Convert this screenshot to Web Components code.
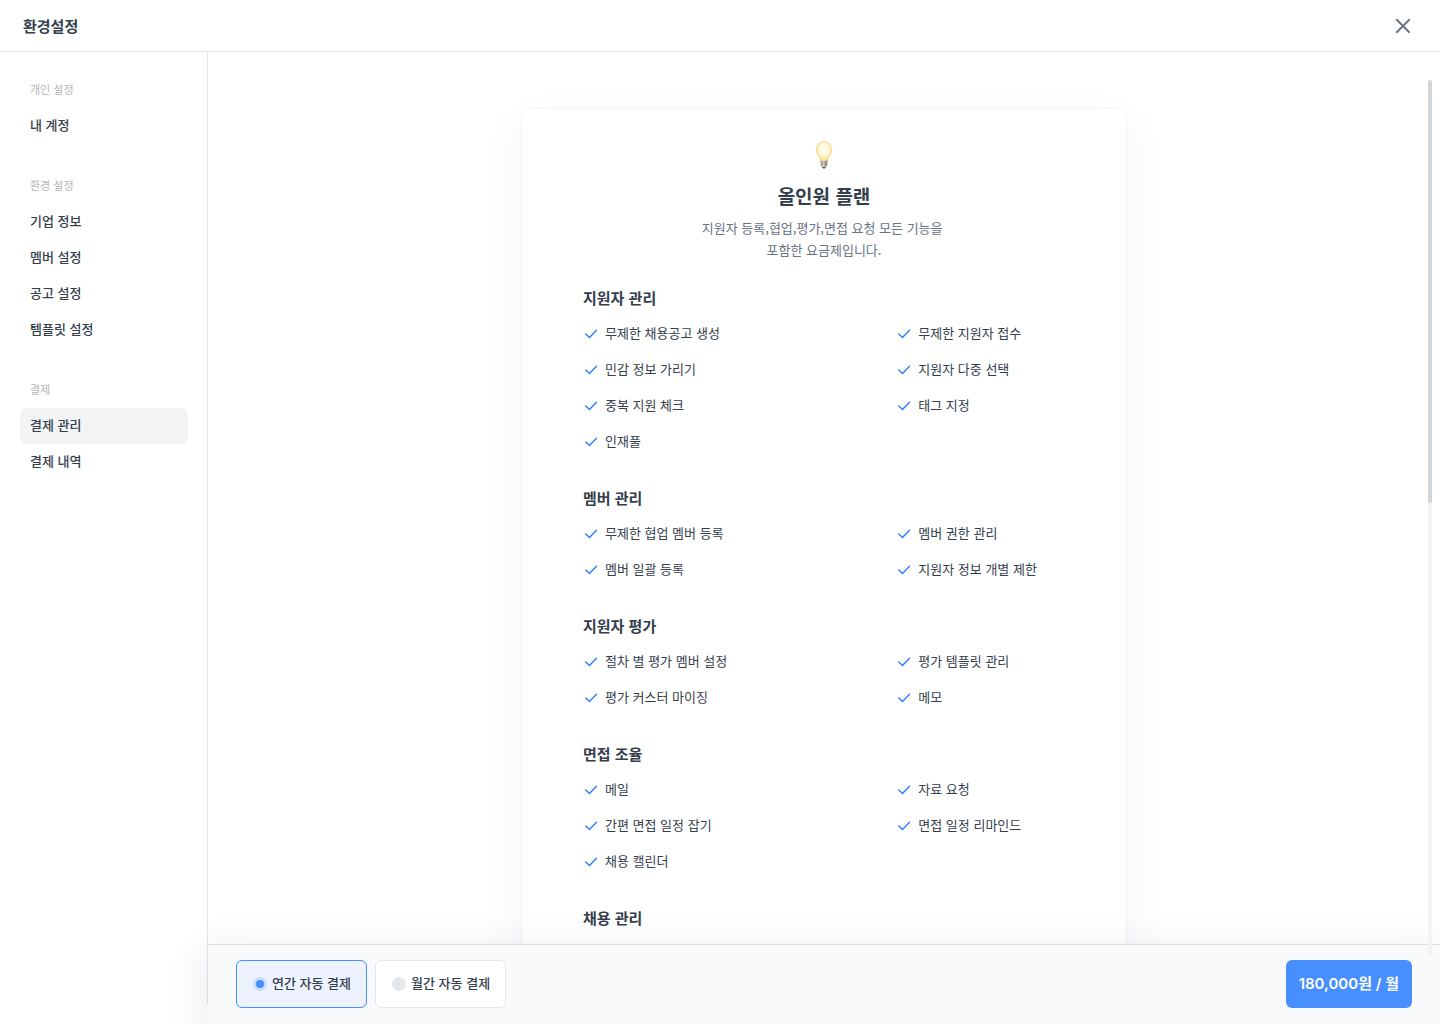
<!DOCTYPE html>
<html lang="ko">
<head>
<meta charset="utf-8">
<meta name="viewport" content="width=device-width, initial-scale=1">
<title>환경설정</title>
<style>
  html, body { margin: 0; height: 100%; }
  body {
    --ink: #343e4c; --muted: #677483; --faint: #b0b5bc; --line: #e4e6e9; --blue: #478eff;
    font: 400 13px/22px "Noto Sans CJK KR", sans-serif;
    color: var(--ink); background: #fff;
  }
</style>
</head>
<body>
<settings-app>
  <settings-header slot="header">환경설정</settings-header>
  <settings-nav slot="nav">
    <nav-group label="개인 설정">
      <nav-item>내 계정</nav-item>
    </nav-group>
    <nav-group label="환경 설정">
      <nav-item>기업 정보</nav-item>
      <nav-item>멤버 설정</nav-item>
      <nav-item>공고 설정</nav-item>
      <nav-item>템플릿 설정</nav-item>
    </nav-group>
    <nav-group label="결제">
      <nav-item current>결제 관리</nav-item>
      <nav-item>결제 내역</nav-item>
    </nav-group>
  </settings-nav>
  <plan-card>
    <span slot="title">올인원 플랜</span>
    <span slot="text">지원자 등록,협업,평가,면접 요청 모든 기능을&nbsp;<br>포함한 요금제입니다.</span>
    <feature-group label="지원자 관리">
      <feature-item>무제한 채용공고 생성</feature-item><feature-item>무제한 지원자 접수</feature-item>
      <feature-item>민감 정보 가리기</feature-item><feature-item>지원자 다중 선택</feature-item>
      <feature-item>중복 지원 체크</feature-item><feature-item>태그 지정</feature-item>
      <feature-item>인재풀</feature-item>
    </feature-group>
    <feature-group label="멤버 관리">
      <feature-item>무제한 협업 멤버 등록</feature-item><feature-item>멤버 권한 관리</feature-item>
      <feature-item>멤버 일괄 등록</feature-item><feature-item>지원자 정보 개별 제한</feature-item>
    </feature-group>
    <feature-group label="지원자 평가">
      <feature-item>절차 별 평가 멤버 설정</feature-item><feature-item>평가 템플릿 관리</feature-item>
      <feature-item>평가 커스터 마이징</feature-item><feature-item>메모</feature-item>
    </feature-group>
    <feature-group label="면접 조율">
      <feature-item>메일</feature-item><feature-item>자료 요청</feature-item>
      <feature-item>간편 면접 일정 잡기</feature-item><feature-item>면접 일정 리마인드</feature-item>
      <feature-item>채용 캘린더</feature-item>
    </feature-group>
    <feature-group label="채용 관리"></feature-group>
  </plan-card>
  <billing-bar slot="footer"></billing-bar>
</settings-app>

<script>
const define = (name, html, setup) => customElements.define(name, class extends HTMLElement {
  constructor() {
    super();
    this.attachShadow({ mode: "open" }).innerHTML = "<style>*{box-sizing:border-box}</style>" + html;
  }
  connectedCallback() { if (setup) setup(this, this.shadowRoot); }
});
const setLabel = (host, root) => { root.querySelector("h2").textContent = host.getAttribute("label"); };

define("settings-app", `
<style>
  :host { display: flex; flex-direction: column; height: 100vh; overflow: hidden; }
  .body { display: flex; flex: 1; min-height: 0; }
  main { position: relative; flex: 1; min-width: 0; display: flex; flex-direction: column; }
  .scroll { flex: 1; min-height: 0; overflow: auto; padding: 56px 28px 0; scrollbar-width: none; }
  .track { position: absolute; z-index: 2; top: 28px; bottom: 69px; right: 8px; width: 4px; background: #f2f3f5; border-radius: 2px 2px 0 0; }
  .thumb { height: 48.3%; background: #d1d6da; border-radius: 2px; }
</style>
<slot name="header"></slot>
<div class="body">
  <slot name="nav"></slot>
  <main>
    <div class="scroll"><slot></slot></div>
    <slot name="footer"></slot>
    <div class="track"><div class="thumb"></div></div>
  </main>
</div>`);

define("settings-header", `
<style>
  :host { display: block; flex: none; }
  header { display: flex; align-items: center; justify-content: space-between; height: 52px; padding: 0 25px 0 23px; border-bottom: 1px solid var(--line); }
  h1 { margin: 0; font-size: 15px; line-height: 24px; font-weight: 700; }
  button { display: flex; padding: 0; border: 0; background: none; color: #6b7684; cursor: pointer; }
</style>
<header>
  <h1><slot></slot></h1>
  <button type="button" aria-label="닫기"><svg width="24" height="24" viewBox="0 0 24 24" fill="none" stroke="currentColor" stroke-width="2"><path d="M5.300 5.300 18.700 18.700M18.700 5.300 5.300 18.700"/></svg></button>
</header>`);

define("settings-nav", `
<style>
  :host { display: block; flex: none; width: 208px; box-sizing: border-box; margin-bottom: 20px; border-right: 1px solid var(--line); }
  nav { display: flex; flex-direction: column; gap: 24px; padding: 20px 19px 20px 20px; }
</style>
<nav><slot></slot></nav>`);

define("nav-group", `
<style>
  :host { display: block; }
  h2 { margin: 0; padding: 0 10px 2px; font-size: 11px; line-height: 34px; font-weight: 400; color: var(--faint); }
</style>
<h2></h2><slot></slot>`, setLabel);

define("nav-item", `
<style>
  :host { display: block; }
  a { display: block; padding: 0 10px 2px; line-height: 34px; font-weight: 500; color: inherit; text-decoration: none; border-radius: 6px; }
  :host([current]) a { background: #f2f3f5; }
</style>
<a href="#"><slot></slot></a>`, (host, root) => {
  if (host.hasAttribute("current")) root.querySelector("a").setAttribute("aria-current", "page");
});

define("plan-card", `
<style>
  :host { display: block; max-width: 606px; margin: 0 auto; box-sizing: border-box; padding: 30px 61px 80px;
    border: 1px solid #f2f3f5; border-radius: 8px; background: #fff; box-shadow: 0 16px 40px rgba(70, 110, 180, .07); }
  .head { display: flex; flex-direction: column; align-items: center; text-align: center; }
  svg { display: block; }
  h1 { margin: 10px 0 6px; font-size: 19px; line-height: 30px; font-weight: 700; }
  p { margin: 0 0 25px; line-height: 22px; color: var(--muted); }
  .groups { display: flex; flex-direction: column; gap: 26px; }
</style>
<div class="head">
  <svg width="32" height="32" viewBox="0 0 32 32" aria-hidden="true">
    <defs>
      <radialGradient id="glass" cx=".5" cy=".4" r=".6"><stop offset="0" stop-color="#fffefa"/><stop offset=".5" stop-color="#fff7dc"/><stop offset=".8" stop-color="#fbe6a0"/><stop offset="1" stop-color="#efc868"/></radialGradient>
      <linearGradient id="cap"><stop offset="0" stop-color="#8d8b88"/><stop offset=".4" stop-color="#dededc"/><stop offset="1" stop-color="#77736e"/></linearGradient>
    </defs>
    <path d="M16 2.500c-4.600 0-7.900 3.500-7.900 7.900 0 3.200 1.500 4.900 2.800 7.100 1 1.700.9 3.500 1.600 4.400.8 1 6.200 1 7 0 .7-.9.600-2.700 1.600-4.400 1.300-2.200 2.800-3.900 2.800-7.100 0-4.400-3.300-7.900-7.900-7.900z" fill="url(#glass)" stroke="#f0d27f" stroke-width=".6"/>
    <path d="M12.500 21.800h7l-.4 4.800c-.2 1-1 1.600-1.500 1.900h-3.200c-.5-.3-1.300-.9-1.500-1.900z" fill="url(#cap)"/>
    <path d="M13 24l6-.5M13.200 26l5.600-.5" stroke="#8b8884" stroke-width=".6"/>
    <path d="M14.200 28h3.600l-.9 1.500h-1.800z" fill="#55504c"/>
  </svg>
  <h1><slot name="title"></slot></h1>
  <p><slot name="text"></slot></p>
</div>
<div class="groups"><slot></slot></div>`);

define("feature-group", `
<style>
  :host { display: block; }
  h2 { margin: 0 0 6px; font-size: 15px; line-height: 24px; font-weight: 700; }
  .grid { display: grid; grid-template-columns: 65% 1fr; }
</style>
<h2></h2>
<div class="grid" role="list"><slot></slot></div>`, setLabel);

define("feature-item", `
<style>
  :host { display: flex; align-items: center; gap: 6px; height: 36px; white-space: nowrap; }
  svg { flex: none; }
  span { padding-bottom: 2px; }
</style>
<svg width="16" height="16" viewBox="0 0 16 16" fill="none" stroke="#3182f6" stroke-width="1.500" stroke-linecap="round" stroke-linejoin="round" aria-hidden="true"><path d="M2.800 8 6.500 11.500 13.500 4.300"/></svg>
<span><slot></slot></span>`, host => host.setAttribute("role", "listitem"));

define("billing-bar", `
<style>
  :host { display: block; flex: none; position: relative; z-index: 1; }
  footer { display: flex; align-items: flex-start; justify-content: space-between; height: 80px; padding: 15px 28px;
    background: #f9fafc; border-top: 1px solid #dfe2e7; box-shadow: 0 8px 40px rgba(50, 65, 95, .13); }
  fieldset { display: flex; gap: 8px; margin: 0; padding: 0; border: 0; }
  label { display: flex; align-items: center; height: 48px; padding: 0 15px 0 16px; border: 1px solid var(--line); border-radius: 6px; background: #fff; font-weight: 500; }
  label:has(:checked) { border-color: var(--blue); background: #ecf3fe; }
  label span { padding: 0 0 2px 5px; }
  input { appearance: none; width: 14px; height: 14px; margin: 0; border-radius: 50%; background: #e4e8eb; }
  input:checked { background: var(--blue); border: 3px solid #c8dcfd; }
  button { height: 48px; padding: 0 13px; border: 0; border-radius: 6px; background: var(--blue); color: #fff; font: 600 15px/24px Inter, "Noto Sans CJK KR", sans-serif; cursor: pointer; }
</style>
<footer>
  <fieldset aria-label="결제 주기">
    <label><input type="radio" name="cycle" checked><span>연간 자동 결제</span></label>
    <label><input type="radio" name="cycle"><span>월간 자동 결제</span></label>
  </fieldset>
  <button type="button">180,000원 / 월</button>
</footer>`);
</script>
</body>
</html>
